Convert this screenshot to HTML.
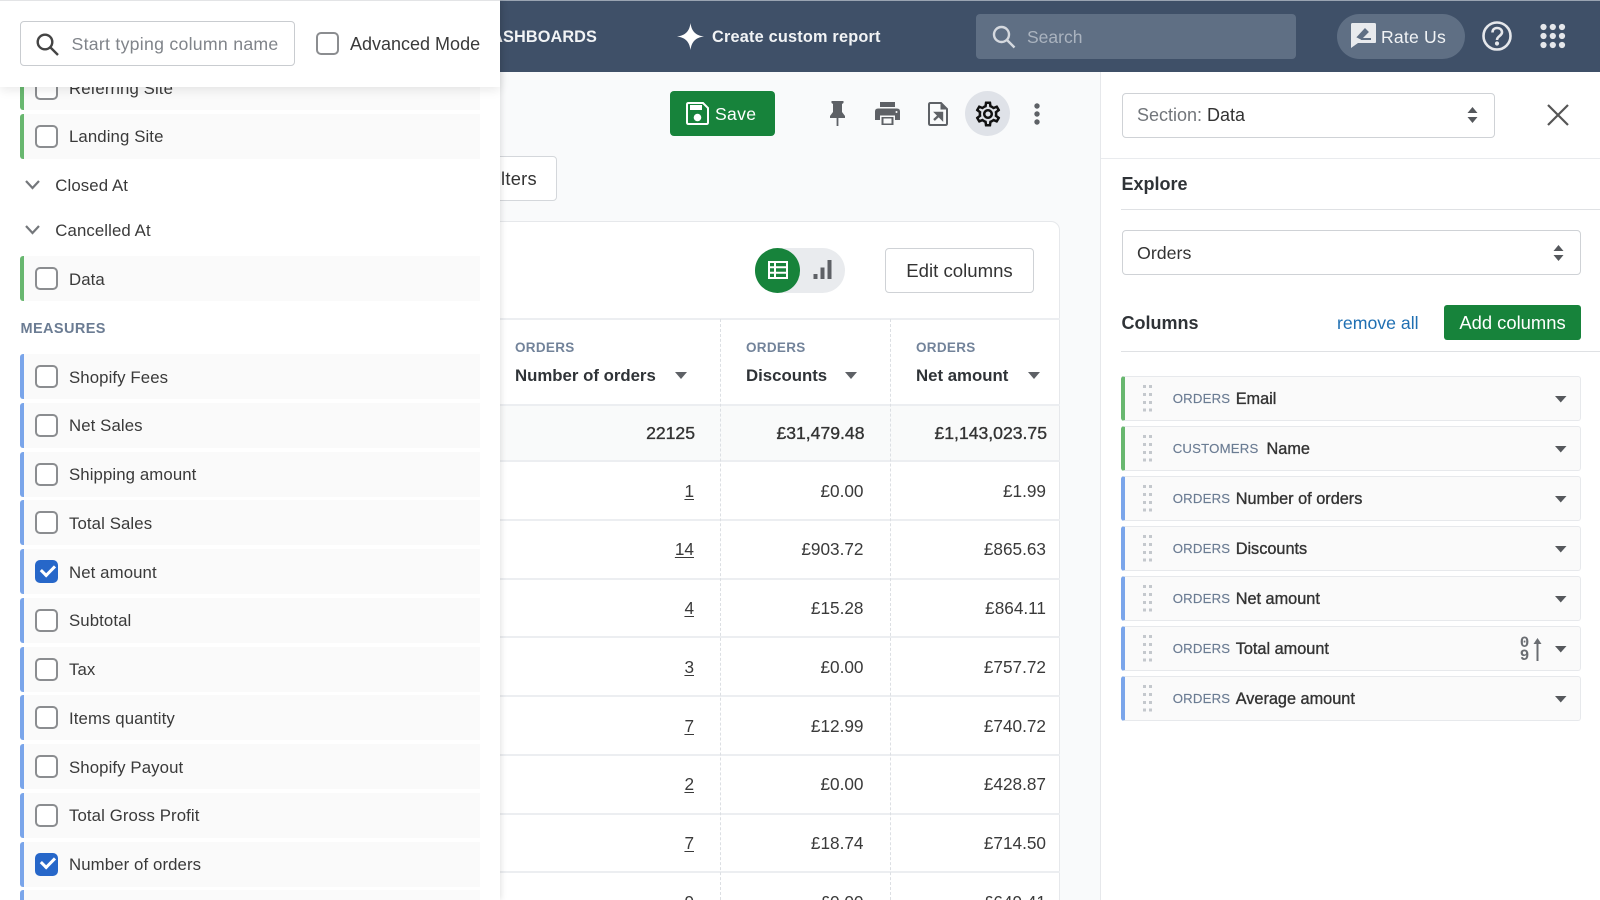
<!DOCTYPE html>
<html><head><meta charset="utf-8"><style>
*{box-sizing:border-box}
html,body{margin:0;padding:0;width:1600px;height:900px;overflow:hidden}
#root{width:1600px;height:900px;position:relative;overflow:hidden;background:#f9fafb;font-family:"Liberation Sans",sans-serif;color:#333}
.a{position:absolute}
.t{position:absolute;white-space:nowrap;height:20px;line-height:20px}
svg{position:absolute;overflow:visible}
.row{position:absolute;left:20px;width:460px;height:45px;background:#fafafa;border-left:4px solid #7aa5ea;border-radius:3px 0 0 3px}
.g{border-left-color:#68b76f}
.cb{position:absolute;left:35px;width:23px;height:23px;border:2.5px solid #8b8d90;border-radius:5px;background:#fff}
.cb.on{background:#2767c9;border-color:#2767c9}
.cb.on:after{content:"";position:absolute;left:3.5px;top:2.5px;width:10.5px;height:6px;border-left:3px solid #fff;border-bottom:3px solid #fff;transform:rotate(-45deg)}
.lb{left:69px;font-size:16.8px;letter-spacing:.1px;color:#3a3a3a}
.h{font-size:13.5px;font-weight:bold;color:#72839a;letter-spacing:.3px}
.ttl{font-size:16.8px;font-weight:bold;color:#2f3337}
.ln{position:absolute;left:500px;width:560px;height:2px;background:#eceef1}
.n{text-align:right;font-size:17.2px;color:#3a3a3a;width:120px}
.tot{font-size:17.6px;-webkit-text-stroke:.35px #333;color:#333}
.u{text-decoration:underline;text-underline-offset:2px}
.card{position:absolute;left:1121px;width:460px;height:44.5px;background:#fafafa;border:1.5px solid #e7e9ec;border-left:4px solid #7aa5ea;border-radius:3px}
.cg{border-left-color:#68b76f}
.o{left:1172.7px;font-size:13.2px;color:#6b7c93;letter-spacing:.2px;-webkit-text-stroke:.15px #6b7c93}
.m{font-size:16.3px;color:#333;-webkit-text-stroke:.35px #333}
.sel{position:absolute;background:#fff;border:1.5px solid #cfd2d6;border-radius:4px;height:45px}
</style></head><body><div id="root">

<div class="a" style="left:500px;top:1px;width:1100px;height:70.5px;background:#3f5068"></div>
<div class="a" style="left:500px;top:0;width:1100px;height:1px;background:#9aa4b2"></div>
<div class="t" style="left:500px;top:27px;width:97px;overflow:hidden;font-size:16.3px;font-weight:bold;color:#f1f3f5;text-align:right;direction:rtl;letter-spacing:.1px">DASHBOARDS</div>
<svg style="left:677px;top:23px" width="27" height="27" viewBox="0 0 26 26"><path d="M13 0C14 8 18 12 26 13 18 14 14 18 13 26 12 18 8 14 0 13 8 12 12 8 13 0Z" fill="#fff"/></svg>
<div class="t" style="left:712px;top:27px;font-size:16.3px;font-weight:bold;color:#f1f3f5;letter-spacing:.2px">Create custom report</div>
<div class="a" style="left:976px;top:14px;width:320px;height:45px;background:#5f6f84;border-radius:4px"></div>
<svg style="left:992px;top:25px" width="24" height="24" viewBox="0 0 24 24" fill="none" stroke="#d5d9df" stroke-width="2.4"><circle cx="9.5" cy="9.5" r="7.5"/><path d="M15 15l7.5 7.5"/></svg>
<div class="t" style="left:1027px;top:27px;font-size:17.5px;color:#aab3bf">Search</div>
<div class="a" style="left:1337px;top:14px;width:128px;height:45px;background:#5f6f84;border-radius:23px"></div>
<svg style="left:1351px;top:23px" width="25" height="25" viewBox="0 0 25 25"><path d="M1.5 0H23.5Q25 0 25 1.5V19Q25 20 23.5 20H7L0 25V1.5Q0 0 1.5 0Z" fill="#e8eaed"/><path d="M7 14L14 6.5 16.5 9 10 15.5ZM10 16H20" stroke="#5f6f84" stroke-width="2" fill="#5f6f84"/></svg>
<div class="t" style="left:1381px;top:27px;font-size:17.6px;color:#f1f3f5;letter-spacing:.2px">Rate Us</div>
<svg style="left:1482px;top:21px" width="30" height="30" viewBox="0 0 30 30" fill="none" stroke="#e5e7eb" stroke-width="2.6"><circle cx="15" cy="15" r="13.5"/><path d="M10.5 11.5C10.5 8.5 12.5 7 15 7c3 0 5 1.8 5 4.3 0 3.7-5 3.7-5 7.7"/><circle cx="15" cy="22.5" r=".8" fill="#e5e7eb"/></svg>
<svg style="left:1540px;top:23px" width="26" height="26" viewBox="0 0 26 26" fill="#e5e7eb"><circle cx="3.5" cy="4" r="3.1"/><circle cx="12.8" cy="4" r="3.1"/><circle cx="22" cy="4" r="3.1"/><circle cx="3.5" cy="13" r="3.1"/><circle cx="12.8" cy="13" r="3.1"/><circle cx="22" cy="13" r="3.1"/><circle cx="3.5" cy="22" r="3.1"/><circle cx="12.8" cy="22" r="3.1"/><circle cx="22" cy="22" r="3.1"/></svg>

<div class="a" style="left:670px;top:91px;width:105px;height:45px;background:#17833b;border-radius:4px"></div>
<svg style="left:686px;top:102px" width="23" height="23" viewBox="0 0 23 23"><path d="M2.5 1H17L22 6V20.5Q22 22 20.5 22H2.5Q1 22 1 20.5V2.5Q1 1 2.5 1Z" fill="none" stroke="#fff" stroke-width="2"/><rect x="4" y="3" width="12" height="5" fill="#fff"/><circle cx="11.5" cy="15.5" r="3.8" fill="#fff"/></svg>
<div class="t" style="left:715px;top:104px;font-size:17.6px;color:#fff;letter-spacing:.3px">Save</div>
<svg style="left:830px;top:101px" width="15" height="25" viewBox="0 0 15 25" fill="#5e6166"><path d="M1.5 0H13.5V2L12 3V11L15 15V17H0V15L3 11V3L1.5 2Z"/><rect x="6.6" y="17" width="1.8" height="8"/></svg>
<svg style="left:875px;top:102px" width="25" height="23" viewBox="0 0 25 23" fill="#5e6166"><rect x="5" y="0" width="15" height="5"/><path d="M3 6.5H22Q25 6.5 25 9.5V18H20V13.5H5V18H0V9.5Q0 6.5 3 6.5Z"/><path d="M6.5 15H18.5V23H6.5Z"/><rect x="8.5" y="16.5" width="8" height="5" fill="#f9fafb"/><circle cx="21.5" cy="10" r="1" fill="#f9fafb"/></svg>
<svg style="left:928px;top:102px" width="20" height="24" viewBox="0 0 20 24"><path d="M2.5 1H13L19 7V21.5Q19 23 17.5 23H2.5Q1 23 1 21.5V2.5Q1 1 2.5 1Z" fill="none" stroke="#5e6166" stroke-width="2"/><path d="M12.5 1V7.5H19Z" fill="#5e6166"/><path d="M6 18L12 12.5M8 11H14V17Z" stroke="#5e6166" stroke-width="2.4" fill="#5e6166"/></svg>
<div class="a" style="left:965px;top:91px;width:45px;height:45px;border-radius:50%;background:#dfe2e8"></div>
<svg style="left:972.5px;top:98.5px" width="30" height="30" viewBox="0 0 24 24" fill="#111"><path d="M19.43 12.98c.04-.32.07-.64.07-.98 0-.34-.03-.66-.07-.98l2.11-1.65c.19-.15.24-.42.12-.64l-2-3.46c-.09-.16-.26-.25-.44-.25-.06 0-.12.01-.17.03l-2.49 1c-.52-.4-1.08-.73-1.69-.98l-.38-2.65C14.46 2.18 14.25 2 14 2h-4c-.25 0-.46.18-.49.42l-.38 2.65c-.61.25-1.17.59-1.69.98l-2.49-1c-.06-.02-.12-.03-.18-.03-.17 0-.34.09-.43.25l-2 3.46c-.13.22-.07.49.12.64l2.11 1.65c-.04.32-.07.65-.07.98 0 .33.03.66.07.98l-2.11 1.65c-.19.15-.24.42-.12.64l2 3.46c.09.16.26.25.44.25.06 0 .12-.01.17-.03l2.49-1c.52.4 1.08.73 1.69.98l.38 2.65c.03.24.24.42.49.42h4c.25 0 .46-.18.49-.42l.38-2.65c.61-.25 1.17-.59 1.69-.98l2.49 1c.06.02.12.03.18.03.17 0 .34-.09.43-.25l2-3.46c.12-.22.07-.49-.12-.64l-2.11-1.65zm-1.98-1.71c.04.31.05.52.05.73 0 .21-.02.43-.05.73l-.14 1.13.89.7 1.08.84-.7 1.21-1.27-.51-1.04-.42-.9.68c-.43.32-.84.56-1.25.73l-1.06.43-.16 1.13-.2 1.35h-1.4l-.19-1.35-.16-1.13-1.06-.43c-.43-.18-.83-.41-1.23-.71l-.91-.7-1.06.43-1.27.51-.7-1.21 1.08-.84.89-.7-.14-1.13c-.03-.31-.05-.54-.05-.74s.02-.43.05-.73l.14-1.13-.89-.7-1.08-.84.7-1.21 1.27.51 1.04.42.9-.68c.43-.32.84-.56 1.25-.73l1.06-.43.16-1.13.2-1.35h1.39l.19 1.35.16 1.13 1.06.43c.43.18.83.41 1.23.71l.91.7 1.06-.43 1.27-.51.7 1.21-1.07.85-.89.7.14 1.13zM12 8c-2.21 0-4 1.79-4 4s1.79 4 4 4 4-1.79 4-4-1.79-4-4-4zm0 6c-1.1 0-2-.9-2-2s.9-2 2-2 2 .9 2 2-.9 2-2 2z"/></svg>
<svg style="left:1033px;top:103px" width="8" height="22" viewBox="0 0 8 22" fill="#5e6166"><circle cx="4" cy="3" r="2.7"/><circle cx="4" cy="11" r="2.7"/><circle cx="4" cy="19" r="2.7"/></svg>

<div class="a" style="left:450px;top:156px;width:107px;height:45px;background:#fff;border:1.5px solid #d4d7db;border-radius:4px"></div>
<div class="t" style="left:500px;top:169px;font-size:18.3px;letter-spacing:.3px;color:#333;width:37px;overflow:hidden;text-align:right;direction:rtl">Filters</div>

<div class="a" style="left:440px;top:221px;width:620px;height:700px;background:#fff;border:1.5px solid #e6e8eb;border-radius:9px"></div>
<div class="a" style="left:755px;top:248px;width:90px;height:44.5px;border-radius:23px;background:#e9ebee"></div>
<div class="a" style="left:755px;top:248px;width:45px;height:44.5px;border-radius:50%;background:#17833b"></div>
<svg style="left:768px;top:261px" width="20" height="18" viewBox="0 0 20 18"><rect x="1" y="1" width="18" height="16" fill="none" stroke="#fff" stroke-width="2"/><path d="M1 6.2H19M1 11.7H19M7 1V17" stroke="#fff" stroke-width="2"/></svg>
<svg style="left:813px;top:260px" width="19" height="19" viewBox="0 0 19 19" fill="#5e6166"><rect x="0.5" y="14" width="4" height="5"/><rect x="7.5" y="7.5" width="4" height="11.5"/><rect x="14.5" y="0" width="4" height="19"/></svg>
<div class="a" style="left:885px;top:248px;width:149px;height:44.5px;background:#fff;border:1.5px solid #cfd2d6;border-radius:4px;text-align:center;line-height:43px;font-size:18.6px;color:#333">Edit columns</div>

<div class="a" style="left:500px;top:405px;width:559px;height:55px;background:#f9fafa"></div>
<div class="ln" style="top:318px"></div>
<div class="ln" style="top:404px"></div>
<div class="ln" style="top:460px"></div>
<div class="ln" style="top:519px"></div>
<div class="ln" style="top:578px"></div>
<div class="ln" style="top:636px"></div>
<div class="ln" style="top:695px"></div>
<div class="ln" style="top:754px"></div>
<div class="ln" style="top:813px"></div>
<div class="ln" style="top:871px"></div>
<div class="a" style="left:720px;top:319px;height:581px;border-left:1px dashed #dcdfe3"></div>
<div class="a" style="left:890px;top:319px;height:581px;border-left:1px dashed #dcdfe3"></div>

<div class="t h" style="left:515px;top:337.5px">ORDERS</div>
<div class="t ttl" style="left:515px;top:365.5px">Number of orders</div>
<svg style="left:675px;top:372px" width="12" height="7"><path d="M0 0H12L6 7Z" fill="#5e6166"/></svg>
<div class="t h" style="left:746px;top:337.5px">ORDERS</div>
<div class="t ttl" style="left:746px;top:365.5px">Discounts</div>
<svg style="left:845px;top:372px" width="12" height="7"><path d="M0 0H12L6 7Z" fill="#5e6166"/></svg>
<div class="t h" style="left:916px;top:337.5px">ORDERS</div>
<div class="t ttl" style="left:916px;top:365.5px">Net amount</div>
<svg style="left:1028px;top:372px" width="12" height="7"><path d="M0 0H12L6 7Z" fill="#5e6166"/></svg>

<div class="t n tot" style="left:575px;top:423px">22125</div>
<div class="t n tot" style="left:744.5px;top:423px">£31,479.48</div>
<div class="t n tot" style="left:927px;top:423px">£1,143,023.75</div>

<div class="t n" style="left:574px;top:480.5px"><span class="u">1</span></div><div class="t n" style="left:743.5px;top:480.5px">£0.00</div><div class="t n" style="left:926px;top:480.5px">£1.99</div>
<div class="t n" style="left:574px;top:539px"><span class="u">14</span></div><div class="t n" style="left:743.5px;top:539px">£903.72</div><div class="t n" style="left:926px;top:539px">£865.63</div>
<div class="t n" style="left:574px;top:598px"><span class="u">4</span></div><div class="t n" style="left:743.5px;top:598px">£15.28</div><div class="t n" style="left:926px;top:598px">£864.11</div>
<div class="t n" style="left:574px;top:656.5px"><span class="u">3</span></div><div class="t n" style="left:743.5px;top:656.5px">£0.00</div><div class="t n" style="left:926px;top:656.5px">£757.72</div>
<div class="t n" style="left:574px;top:715.5px"><span class="u">7</span></div><div class="t n" style="left:743.5px;top:715.5px">£12.99</div><div class="t n" style="left:926px;top:715.5px">£740.72</div>
<div class="t n" style="left:574px;top:774px"><span class="u">2</span></div><div class="t n" style="left:743.5px;top:774px">£0.00</div><div class="t n" style="left:926px;top:774px">£428.87</div>
<div class="t n" style="left:574px;top:833px"><span class="u">7</span></div><div class="t n" style="left:743.5px;top:833px">£18.74</div><div class="t n" style="left:926px;top:833px">£714.50</div>
<div class="t n" style="left:574px;top:892px"><span class="u">9</span></div><div class="t n" style="left:743.5px;top:892px">£0.00</div><div class="t n" style="left:926px;top:892px">£649.41</div>

<!-- right panel -->
<div class="a" style="left:1100px;top:71.5px;width:500px;height:829px;background:#fff;border-left:1.5px solid #e6e8eb"></div>
<div class="sel" style="left:1121.5px;top:93px;width:373.5px"></div>
<div class="t" style="left:1137px;top:105px;font-size:18px;color:#72767b">Section: <span style="color:#333">Data</span></div>
<svg style="left:1467px;top:107px" width="11" height="16" viewBox="0 0 11 16" fill="#55585c"><path d="M5.5 0L10.5 6H.5ZM5.5 16L.5 10H10.5Z"/></svg>
<svg style="left:1548px;top:105px" width="20" height="20" viewBox="0 0 20 20" stroke="#555" stroke-width="2.2"><path d="M0 0L20 20M20 0L0 20"/></svg>
<div class="a" style="left:1101px;top:157.5px;width:499px;height:1.5px;background:#e9ebee"></div>
<div class="t" style="left:1121.5px;top:174px;font-size:18px;font-weight:bold;color:#2f3337">Explore</div>
<div class="a" style="left:1121px;top:209px;width:479px;height:1px;background:#dfe1e4"></div>
<div class="sel" style="left:1121.5px;top:230px;width:459.5px"></div>
<div class="t" style="left:1137px;top:242.5px;font-size:17.8px;color:#333">Orders</div>
<svg style="left:1553px;top:244.5px" width="11" height="16" viewBox="0 0 11 16" fill="#55585c"><path d="M5.5 0L10.5 6H.5ZM5.5 16L.5 10H10.5Z"/></svg>
<div class="t" style="left:1121.5px;top:312.5px;font-size:18px;font-weight:bold;color:#2f3337">Columns</div>
<div class="t" style="left:1337px;top:312.5px;font-size:17.7px;color:#1f6fb2">remove all</div>
<div class="a" style="left:1444px;top:305px;width:137px;height:35px;background:#17833b;border-radius:3px;text-align:center;line-height:35px;font-size:18.4px;color:#fff">Add columns</div>
<div class="a" style="left:1121px;top:350.5px;width:479px;height:1px;background:#dfe1e4"></div>

<div class="card cg" style="top:376.3px"></div>
<div class="card cg" style="top:426.3px"></div>
<div class="card" style="top:476.3px"></div>
<div class="card" style="top:526.3px"></div>
<div class="card" style="top:576.3px"></div>
<div class="card" style="top:626.3px"></div>
<div class="card" style="top:676.3px"></div>

<svg style="left:1143px;top:385px" width="10" height="29" fill="#c4c8cd"><path d="M0 0h3v3H0zM6 0h3v3H6zM0 8h3v3H0zM6 8h3v3H6zM0 16h3v3H0zM6 16h3v3H6zM0 23.5h3v3H0zM6 23.5h3v3H6z"/></svg>
<svg style="left:1143px;top:435px" width="10" height="29" fill="#c4c8cd"><path d="M0 0h3v3H0zM6 0h3v3H6zM0 8h3v3H0zM6 8h3v3H6zM0 16h3v3H0zM6 16h3v3H6zM0 23.5h3v3H0zM6 23.5h3v3H6z"/></svg>
<svg style="left:1143px;top:485px" width="10" height="29" fill="#c4c8cd"><path d="M0 0h3v3H0zM6 0h3v3H6zM0 8h3v3H0zM6 8h3v3H6zM0 16h3v3H0zM6 16h3v3H6zM0 23.5h3v3H0zM6 23.5h3v3H6z"/></svg>
<svg style="left:1143px;top:535px" width="10" height="29" fill="#c4c8cd"><path d="M0 0h3v3H0zM6 0h3v3H6zM0 8h3v3H0zM6 8h3v3H6zM0 16h3v3H0zM6 16h3v3H6zM0 23.5h3v3H0zM6 23.5h3v3H6z"/></svg>
<svg style="left:1143px;top:585px" width="10" height="29" fill="#c4c8cd"><path d="M0 0h3v3H0zM6 0h3v3H6zM0 8h3v3H0zM6 8h3v3H6zM0 16h3v3H0zM6 16h3v3H6zM0 23.5h3v3H0zM6 23.5h3v3H6z"/></svg>
<svg style="left:1143px;top:635px" width="10" height="29" fill="#c4c8cd"><path d="M0 0h3v3H0zM6 0h3v3H6zM0 8h3v3H0zM6 8h3v3H6zM0 16h3v3H0zM6 16h3v3H6zM0 23.5h3v3H0zM6 23.5h3v3H6z"/></svg>
<svg style="left:1143px;top:685px" width="10" height="29" fill="#c4c8cd"><path d="M0 0h3v3H0zM6 0h3v3H6zM0 8h3v3H0zM6 8h3v3H6zM0 16h3v3H0zM6 16h3v3H6zM0 23.5h3v3H0zM6 23.5h3v3H6z"/></svg>

<div class="t o" style="top:389px">ORDERS</div><div class="t m" style="left:1235.7px;top:388.7px">Email</div>
<div class="t o" style="top:439px">CUSTOMERS</div><div class="t m" style="left:1266.5px;top:438.7px">Name</div>
<div class="t o" style="top:489px">ORDERS</div><div class="t m" style="left:1235.7px;top:488.7px">Number of orders</div>
<div class="t o" style="top:539px">ORDERS</div><div class="t m" style="left:1235.7px;top:538.7px">Discounts</div>
<div class="t o" style="top:589px">ORDERS</div><div class="t m" style="left:1235.7px;top:588.7px">Net amount</div>
<div class="t o" style="top:639px">ORDERS</div><div class="t m" style="left:1235.7px;top:638.7px">Total amount</div>
<div class="t o" style="top:689px">ORDERS</div><div class="t m" style="left:1235.7px;top:688.7px">Average amount</div>

<svg style="left:1554.5px;top:396px" width="11.5" height="6.5"><path d="M0 0H11.5L5.75 6.5Z" fill="#55585c"/></svg>
<svg style="left:1554.5px;top:446px" width="11.5" height="6.5"><path d="M0 0H11.5L5.75 6.5Z" fill="#55585c"/></svg>
<svg style="left:1554.5px;top:496px" width="11.5" height="6.5"><path d="M0 0H11.5L5.75 6.5Z" fill="#55585c"/></svg>
<svg style="left:1554.5px;top:546px" width="11.5" height="6.5"><path d="M0 0H11.5L5.75 6.5Z" fill="#55585c"/></svg>
<svg style="left:1554.5px;top:596px" width="11.5" height="6.5"><path d="M0 0H11.5L5.75 6.5Z" fill="#55585c"/></svg>
<svg style="left:1554.5px;top:646px" width="11.5" height="6.5"><path d="M0 0H11.5L5.75 6.5Z" fill="#55585c"/></svg>
<svg style="left:1554.5px;top:696px" width="11.5" height="6.5"><path d="M0 0H11.5L5.75 6.5Z" fill="#55585c"/></svg>

<div class="a" style="left:1519px;top:637px;width:11px;font:bold 16px/12px 'Liberation Mono',monospace;color:#6a6d72;text-align:center">0</div>
<div class="a" style="left:1519px;top:649.5px;width:11px;font:bold 16px/12px 'Liberation Mono',monospace;color:#6a6d72;text-align:center">9</div>
<svg style="left:1533px;top:638px" width="9" height="23" viewBox="0 0 9 23"><path d="M4.5 0L8.5 6H5.5V23H3.5V6H.5Z" fill="#6a6d72"/></svg>

<!-- left panel -->
<div class="a" style="left:0;top:0;width:500px;height:900px;background:#fff;box-shadow:1px 0 6px rgba(0,0,0,.12)"></div>

<div class="row g" style="top:65px"></div><div class="cb" style="top:76.5px"></div><div class="t lb" style="top:78.5px">Referring Site</div>
<div class="row g" style="top:113.7px"></div><div class="cb" style="top:124.7px"></div><div class="t lb" style="top:126.5px">Landing Site</div>
<svg style="left:24.5px;top:180px" width="15" height="10" viewBox="0 0 15 10" fill="none" stroke="#74777b" stroke-width="2.2"><path d="M1 1L7.5 8 14 1"/></svg>
<div class="t" style="left:55.3px;top:176px;font-size:16.8px;letter-spacing:.1px;color:#3a3a3a">Closed At</div>
<svg style="left:24.5px;top:225px" width="15" height="10" viewBox="0 0 15 10" fill="none" stroke="#74777b" stroke-width="2.2"><path d="M1 1L7.5 8 14 1"/></svg>
<div class="t" style="left:55.3px;top:221px;font-size:16.8px;letter-spacing:.1px;color:#3a3a3a">Cancelled At</div>
<div class="row g" style="top:256px"></div><div class="cb" style="top:267px"></div><div class="t lb" style="top:270px">Data</div>
<div class="t" style="left:20.5px;top:318.5px;font-size:14.5px;font-weight:bold;color:#6b7c93;letter-spacing:.4px">MEASURES</div>

<div class="row" style="top:354px"></div><div class="cb" style="top:365px"></div><div class="t lb" style="top:367.5px">Shopify Fees</div>
<div class="row" style="top:402.7px"></div><div class="cb" style="top:413.7px"></div><div class="t lb" style="top:416px">Net Sales</div>
<div class="row" style="top:451.5px"></div><div class="cb" style="top:462.5px"></div><div class="t lb" style="top:465px">Shipping amount</div>
<div class="row" style="top:500.2px"></div><div class="cb" style="top:511.2px"></div><div class="t lb" style="top:514px">Total Sales</div>
<div class="row" style="top:549px"></div><div class="cb on" style="top:560px"></div><div class="t lb" style="top:562.5px">Net amount</div>
<div class="row" style="top:597.7px"></div><div class="cb" style="top:608.7px"></div><div class="t lb" style="top:611px">Subtotal</div>
<div class="row" style="top:646.5px"></div><div class="cb" style="top:657.5px"></div><div class="t lb" style="top:660px">Tax</div>
<div class="row" style="top:695.2px"></div><div class="cb" style="top:706.2px"></div><div class="t lb" style="top:709px">Items quantity</div>
<div class="row" style="top:744px"></div><div class="cb" style="top:755px"></div><div class="t lb" style="top:757.5px">Shopify Payout</div>
<div class="row" style="top:792.7px"></div><div class="cb" style="top:803.7px"></div><div class="t lb" style="top:806px">Total Gross Profit</div>
<div class="row" style="top:841.5px"></div><div class="cb on" style="top:852.5px"></div><div class="t lb" style="top:855px">Number of orders</div>
<div class="row" style="top:890px"></div>

<div class="a" style="left:0;top:0;width:500px;height:86.5px;background:#fff;border-top:1px solid #e3e4e6;box-shadow:0 3px 10px rgba(0,0,0,.09)"></div>
<div class="a" style="left:20px;top:21px;width:275px;height:45px;background:#fff;border:1.5px solid #c9ccd0;border-radius:4px"></div>
<svg style="left:36px;top:33px" width="23" height="23" viewBox="0 0 23 23" fill="none" stroke="#444" stroke-width="2.4"><circle cx="9" cy="9" r="7.3"/><path d="M14.5 14.5L22 22"/></svg>
<div class="t" style="left:71.5px;top:34px;font-size:17.7px;color:#80848a;letter-spacing:.27px">Start typing column name</div>
<div class="cb" style="left:316px;top:32px"></div>
<div class="t" style="left:350px;top:34px;font-size:18px;color:#3a3a3a">Advanced Mode</div>

</div></body></html>
